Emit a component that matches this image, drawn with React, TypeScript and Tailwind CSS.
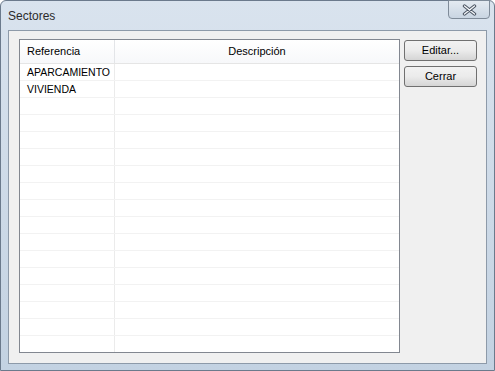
import React from 'react';

const rows = ['APARCAMIENTO', 'VIVIENDA', ...Array(15).fill('')];

export default function App() {
  return (
    <div className="w-[495px] h-[371px] bg-white">
      <div className="w-[495px] h-[371px] flex flex-col rounded-t-[6px] border border-[#6b7a8c] bg-gradient-to-b from-[#d9e3ee] to-[#c3d2e2] font-['Liberation_Sans',sans-serif]">
        {/* title bar */}
        <div className="h-[29px] flex items-start justify-between pl-[7px] pr-[4px]">
          <span className="mt-[6px] text-[12px] text-[#2b2b2b]">Sectores</span>
          <div className="w-[42px] h-[19px] -mt-px rounded-b-[4px] border border-[#7f8b99] bg-gradient-to-b from-[#e4eaf1] to-[#c9d5e2] flex items-center justify-center">
            <svg width="15" height="12" viewBox="0 0 15 12">
              <path d="M2.5 2 L12.5 10 M12.5 2 L2.5 10" stroke="#4a5462" strokeWidth="3.4" strokeLinecap="round" />
              <path d="M2.5 2 L12.5 10 M12.5 2 L2.5 10" stroke="#f4f6f9" strokeWidth="1.4" strokeLinecap="round" />
            </svg>
          </div>
        </div>
        {/* client area */}
        <div className="mx-[7px] h-[334px] border border-[#8d9aa9] bg-[#f0f0f0] flex pl-[10px] pt-[8px]">
          <div className="w-[381px] h-[314px] border border-[#828790] bg-white flex flex-col overflow-hidden">
            <div className="h-[24px] flex shrink-0 border-b border-[#e5e5e5] bg-gradient-to-b from-white to-[#f7f8fa] text-[11px] text-black">
              <div className="w-[95px] border-r border-[#e3e5e8] flex items-center pl-[7px]">Referencia</div>
              <div className="flex-1 flex items-center justify-center">Descripción</div>
            </div>
            {rows.map((r, i) => (
              <div key={i} className="h-[17px] shrink-0 flex border-b border-[#f2f2f2] text-[10.5px] text-black">
                <div className="w-[95px] border-r border-[#ebebeb] flex items-center pl-[7px] pt-px">{r}</div>
                <div className="flex-1" />
              </div>
            ))}
            <div className="flex-1 flex">
              <div className="w-[95px] border-r border-[#ebebeb]" />
            </div>
          </div>
          <div className="ml-[4px] flex flex-col gap-[5px] pt-px">
            <button className="w-[73px] h-[21px] rounded-[3px] border border-[#707070] bg-gradient-to-b from-[#f2f2f2] via-[#ebebeb] to-[#d5d5d5] text-[11px] text-black">Editar...</button>
            <button className="w-[73px] h-[21px] rounded-[3px] border border-[#707070] bg-gradient-to-b from-[#f2f2f2] via-[#ebebeb] to-[#d5d5d5] text-[11px] text-black">Cerrar</button>
          </div>
        </div>
      </div>
    </div>
  );
}
